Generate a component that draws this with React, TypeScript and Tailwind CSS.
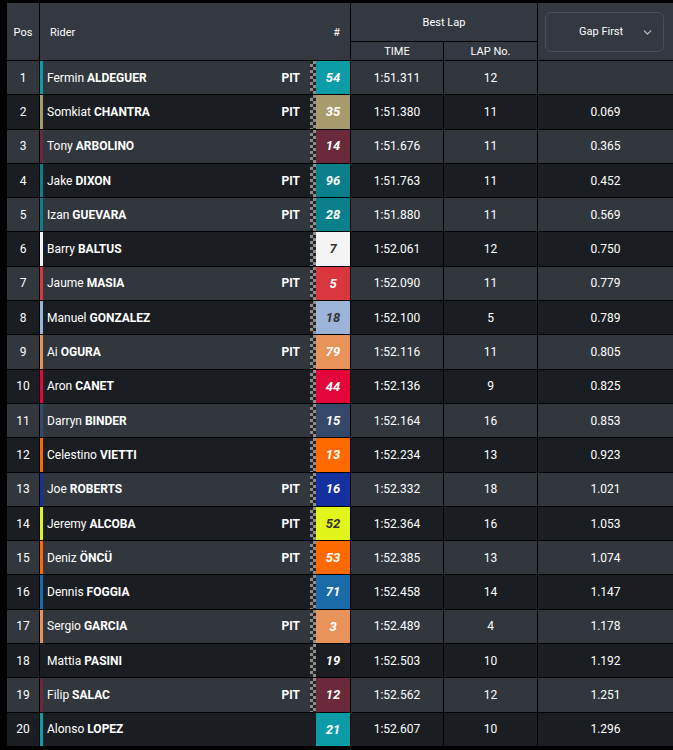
import { ChevronDown } from "lucide-react"

type Row = {
  first: string
  last: string
  pit: boolean
  num: string
  color: string
  dark?: boolean
  time: string
  lap: string
  gap: string
  noFlag?: boolean
}

const rows: Row[] = [
  { first: "Fermin", last: "ALDEGUER", pit: true, num: "54", color: "#0c9ca8", time: "1:51.311", lap: "12", gap: "" },
  { first: "Somkiat", last: "CHANTRA", pit: true, num: "35", color: "#a89b6b", time: "1:51.380", lap: "11", gap: "0.069" },
  { first: "Tony", last: "ARBOLINO", pit: false, num: "14", color: "#6b2a3b", time: "1:51.676", lap: "11", gap: "0.365" },
  { first: "Jake", last: "DIXON", pit: true, num: "96", color: "#0b7f8a", time: "1:51.763", lap: "11", gap: "0.452" },
  { first: "Izan", last: "GUEVARA", pit: true, num: "28", color: "#0b7f8a", time: "1:51.880", lap: "11", gap: "0.569" },
  { first: "Barry", last: "BALTUS", pit: false, num: "7", color: "#f4f4f4", dark: true, time: "1:52.061", lap: "12", gap: "0.750" },
  { first: "Jaume", last: "MASIA", pit: true, num: "5", color: "#d9363e", time: "1:52.090", lap: "11", gap: "0.779" },
  { first: "Manuel", last: "GONZALEZ", pit: false, num: "18", color: "#9cb4d8", dark: true, time: "1:52.100", lap: "5", gap: "0.789" },
  { first: "Ai", last: "OGURA", pit: true, num: "79", color: "#e8935a", time: "1:52.116", lap: "11", gap: "0.805" },
  { first: "Aron", last: "CANET", pit: false, num: "44", color: "#e4063a", time: "1:52.136", lap: "9", gap: "0.825" },
  { first: "Darryn", last: "BINDER", pit: false, num: "15", color: "#34486a", time: "1:52.164", lap: "16", gap: "0.853" },
  { first: "Celestino", last: "VIETTI", pit: false, num: "13", color: "#ff6a00", time: "1:52.234", lap: "13", gap: "0.923" },
  { first: "Joe", last: "ROBERTS", pit: true, num: "16", color: "#1431a0", time: "1:52.332", lap: "18", gap: "1.021" },
  { first: "Jeremy", last: "ALCOBA", pit: true, num: "52", color: "#e2f51a", dark: true, time: "1:52.364", lap: "16", gap: "1.053" },
  { first: "Deniz", last: "ÖNCÜ", pit: true, num: "53", color: "#ff6a00", time: "1:52.385", lap: "13", gap: "1.074" },
  { first: "Dennis", last: "FOGGIA", pit: false, num: "71", color: "#1a6ca8", time: "1:52.458", lap: "14", gap: "1.147" },
  { first: "Sergio", last: "GARCIA", pit: true, num: "3", color: "#e8935a", time: "1:52.489", lap: "4", gap: "1.178" },
  { first: "Mattia", last: "PASINI", pit: false, num: "19", color: "transparent", time: "1:52.503", lap: "10", gap: "1.192" },
  { first: "Filip", last: "SALAC", pit: true, num: "12", color: "#6b2a3b", time: "1:52.562", lap: "12", gap: "1.251" },
  { first: "Alonso", last: "LOPEZ", pit: false, num: "21", color: "#0c9ca8", time: "1:52.607", lap: "10", gap: "1.296", noFlag: true },
]

const checker =
  "w-[6px] h-full bg-[repeating-conic-gradient(#8c8c8c_0_25%,#262626_0_50%)] bg-[length:6px_6px]"

export default function App() {
  return (
    <div className="w-[673px] h-[750px] overflow-hidden bg-black pl-[7px] pt-[3px] font-['Roboto',sans-serif] text-white">
      <div className="grid grid-cols-[32px_310px_92px_93px_1fr] gap-px bg-black">
        {/* header */}
        <div className="row-span-2 bg-[#343840] flex items-center justify-center pt-[3px] text-[11px]">Pos</div>
        <div className="row-span-2 bg-[#343840] flex items-center justify-between pt-[3px] pl-[10px] pr-[10px] text-[11px]">
          <span>Rider</span>
          <span>#</span>
        </div>
        <div className="col-span-2 h-[38px] bg-[#343840] flex items-center justify-center pt-[2px] text-[11px]">Best Lap</div>
        <div className="row-span-2 bg-[#343840] flex items-center pl-[7px] pr-[9px]">
          <div className="w-full h-[40px] rounded-md border border-[#4a4e56] flex items-center justify-between pt-[2px] pl-[33px] pr-[9px] text-[11px]">
            <span>Gap First</span>
            <ChevronDown size={13} strokeWidth={2} className="text-[#c8c8c8]" />
          </div>
        </div>
        <div className="h-[18px] bg-[#343840] flex items-center justify-center pt-[2px] text-[11px]">TIME</div>
        <div className="h-[18px] bg-[#343840] flex items-center justify-center pt-[2px] text-[11px]">LAP No.</div>

        {rows.map((r, i) => {
          const bg = i % 2 === 0 ? "bg-[#32363d]" : "bg-[#1a1d21]"
          return [
            <div key={`p${i}`} className={`${bg} h-[33.3px] flex items-center justify-center text-[12px]`}>
              {i + 1}
            </div>,
            <div key={`r${i}`} className={`${bg} h-[33.3px] flex items-center`}>
              <div className="w-[3px] h-full" style={{ background: r.color }} />
              <div className="flex-1 pl-[4px] text-[12px]">
                {r.first} <span className="font-bold">{r.last}</span>
              </div>
              {r.pit && <span className="text-[12px] font-bold pr-[10px]">PIT</span>}
              {r.noFlag ? <div className="w-[6px]" /> : <div className={checker} />}
              <div
                className={`w-[34px] h-full flex items-center justify-center text-[13px] font-bold italic ${r.dark ? "text-[#333]" : "text-white"}`}
                style={{ background: r.color }}
              >
                {r.num}
              </div>
            </div>,
            <div key={`t${i}`} className={`${bg} h-[33.3px] flex items-center justify-center text-[12px]`}>
              {r.time}
            </div>,
            <div key={`l${i}`} className={`${bg} h-[33.3px] flex items-center justify-center text-[12px]`}>
              {r.lap}
            </div>,
            <div key={`g${i}`} className={`${bg} h-[33.3px] flex items-center justify-center text-[12px]`}>
              {r.gap}
            </div>,
          ]
        })}
      </div>
    </div>
  )
}
